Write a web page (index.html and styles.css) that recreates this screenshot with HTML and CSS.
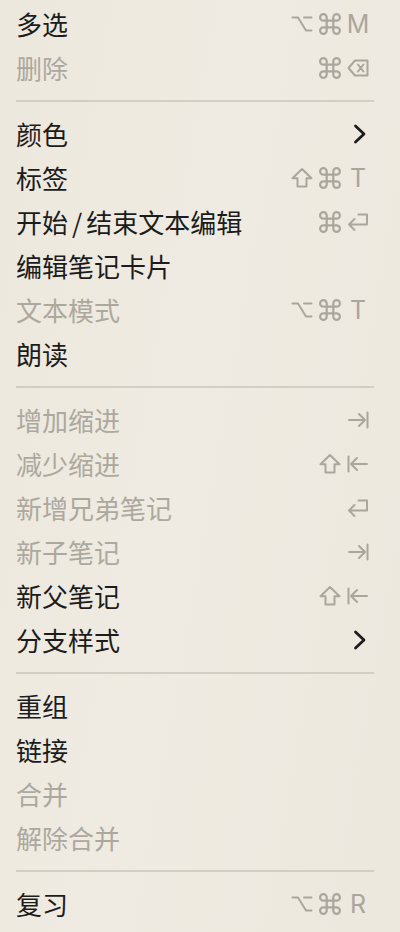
FILE: index.html
```html
<!DOCTYPE html>
<html lang="zh-CN">
<head>
<meta charset="utf-8">
<title>菜单</title>
<link rel="stylesheet" href="styles.css">
</head>
<body>
<svg width="0" height="0" class="defs" aria-hidden="true">
  <defs>
    <symbol id="opt" viewBox="0 0 22 22"><path d="M1.5 4.5H7L15 17.5H20.5M13 4.5H20.5"/></symbol>
    <symbol id="cmd" viewBox="2 2 20 20"><path d="M15 6v12a3 3 0 1 0 3-3H6a3 3 0 1 0 3 3V6a3 3 0 1 0-3 3h12a3 3 0 1 0-3-3"/></symbol>
    <symbol id="shift" viewBox="0 0 22 22"><path d="M11 2L1.5 11.2H6.5V19.5H15.5V11.2H20.5Z"/></symbol>
    <symbol id="del" viewBox="0 0 22 22"><path d="M8 3.5H20.5V18.5H8L1.5 11Z M11 7.5L16.5 14.5M16.5 7.5L11 14.5"/></symbol>
    <symbol id="ret" viewBox="0 0 22 22"><path d="M11.5 3.5H20V13.5H2M7.5 8L2 13.5L7.5 19"/></symbol>
    <symbol id="tab" viewBox="0 0 22 22"><path d="M2 11H18M12 5L18 11L12 17M20.5 3.5V18.5"/></symbol>
    <symbol id="btab" viewBox="0 0 22 22"><path d="M20 11H4M10 5L4 11L10 17M1.5 3.5V18.5"/></symbol>
    <symbol id="chev" viewBox="0 0 22 22"><path d="M8.5 3L17 11L8.5 19"/></symbol>
  </defs>
</svg>
<div class="menu">
  <div class="item"><span class="label">多选</span><span class="keys"><svg class="k"><use href="#opt"/></svg><svg class="k"><use href="#cmd"/></svg><span class="k ch">M</span></span></div>
  <div class="item off"><span class="label">删除</span><span class="keys"><svg class="k"><use href="#cmd"/></svg><svg class="k"><use href="#del"/></svg></span></div>
  <div class="sep"></div>
  <div class="item"><span class="label">颜色</span><span class="keys"><svg class="k chev"><use href="#chev"/></svg></span></div>
  <div class="item"><span class="label">标签</span><span class="keys"><svg class="k"><use href="#shift"/></svg><svg class="k"><use href="#cmd"/></svg><span class="k ch">T</span></span></div>
  <div class="item"><span class="label">开始<span class="slash">/</span>结束文本编辑</span><span class="keys"><svg class="k"><use href="#cmd"/></svg><svg class="k"><use href="#ret"/></svg></span></div>
  <div class="item"><span class="label">编辑笔记卡片</span></div>
  <div class="item off"><span class="label">文本模式</span><span class="keys"><svg class="k"><use href="#opt"/></svg><svg class="k"><use href="#cmd"/></svg><span class="k ch">T</span></span></div>
  <div class="item"><span class="label">朗读</span></div>
  <div class="sep"></div>
  <div class="item off"><span class="label">增加缩进</span><span class="keys"><svg class="k"><use href="#tab"/></svg></span></div>
  <div class="item off"><span class="label">减少缩进</span><span class="keys"><svg class="k"><use href="#shift"/></svg><svg class="k"><use href="#btab"/></svg></span></div>
  <div class="item off"><span class="label">新增兄弟笔记</span><span class="keys"><svg class="k"><use href="#ret"/></svg></span></div>
  <div class="item off"><span class="label">新子笔记</span><span class="keys"><svg class="k"><use href="#tab"/></svg></span></div>
  <div class="item"><span class="label">新父笔记</span><span class="keys"><svg class="k"><use href="#shift"/></svg><svg class="k"><use href="#btab"/></svg></span></div>
  <div class="item"><span class="label">分支样式</span><span class="keys"><svg class="k chev"><use href="#chev"/></svg></span></div>
  <div class="sep"></div>
  <div class="item"><span class="label">重组</span></div>
  <div class="item"><span class="label">链接</span></div>
  <div class="item off"><span class="label">合并</span></div>
  <div class="item off"><span class="label">解除合并</span></div>
  <div class="sep"></div>
  <div class="item"><span class="label">复习</span><span class="keys"><svg class="k"><use href="#opt"/></svg><svg class="k"><use href="#cmd"/></svg><span class="k ch">R</span></span></div>
</div>
</body>
</html>
```
FILE: styles.css
```css
html, body {
  margin: 0;
  padding: 0;
  background: #ede9df;
}
.defs {
  position: absolute;
  width: 0;
  height: 0;
  overflow: hidden;
}
.menu {
  width: 400px;
  height: 932px;
  box-sizing: border-box;
  padding: 2px 31px 0 16px;
  background: linear-gradient(100deg, #ece8dd 0%, #efebe2 45%, #ece8de 100%);
  font-family: "Noto Sans CJK SC", "Noto Sans", sans-serif;
}
.item {
  height: 44px;
  display: flex;
  align-items: center;
  justify-content: space-between;
}
.label {
  font-size: 26px;
  line-height: 44px;
  color: #1c1c1c;
  letter-spacing: 0;
}
.slash {
  margin: 0 4px;
}
.item.off .label {
  color: #aca89e;
}
.keys {
  display: flex;
  align-items: center;
  gap: 6px;
}
.k {
  width: 22px;
  height: 22px;
  fill: none;
  stroke: #aaa69d;
  stroke-width: 2;
  stroke-linejoin: round;
  stroke-linecap: round;
}
.ch {
  display: flex;
  align-items: center;
  justify-content: center;
  font-family: "Inter", "Liberation Sans", sans-serif;
  font-size: 25px;
  line-height: 22px;
  color: #aaa69d;
}
.k.chev {
  stroke: #1c1c1c;
  stroke-width: 2.8;
}
.sep {
  height: 22px;
  display: flex;
  align-items: center;
  margin-right: -5px;
}
.sep::before {
  content: "";
  display: block;
  width: 100%;
  height: 1.5px;
  background: #d3cec4;
}
```
